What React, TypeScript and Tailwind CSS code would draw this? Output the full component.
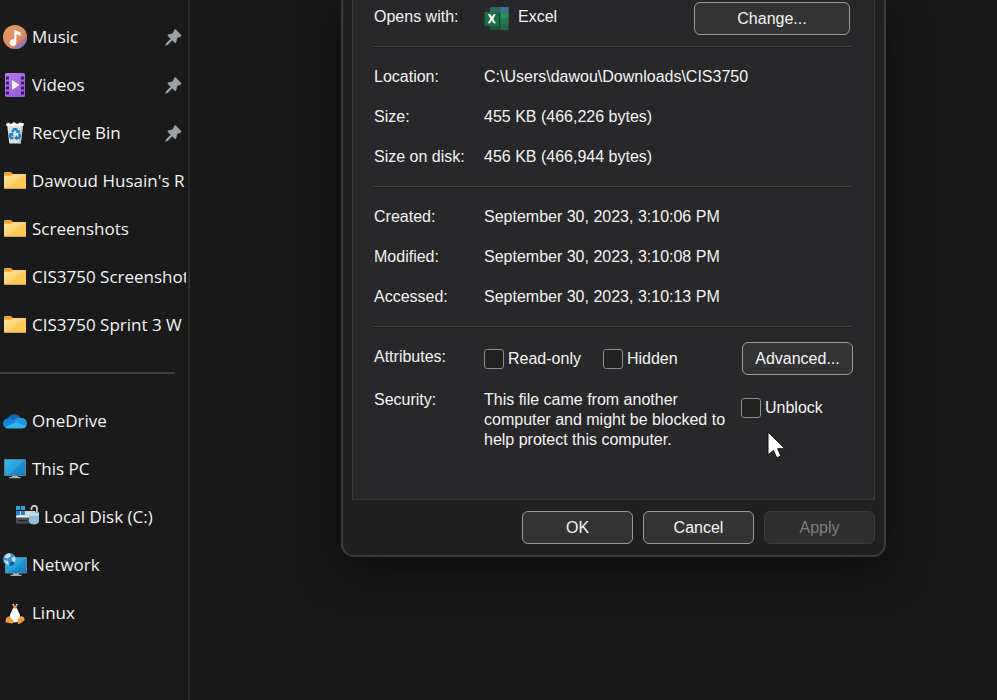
import type { ReactNode } from "react";

function MusicIcon() {
  return (
    <svg width="24" height="24" viewBox="0 0 24 24" aria-hidden="true">
      <defs>
        <clipPath id="disc"><circle cx="12" cy="12" r="12" /></clipPath>
        <linearGradient id="discFill" x1="0" y1="0" x2="1" y2="1">
          <stop offset="0" stopColor="#ec9a66" />
          <stop offset="1" stopColor="#d07e5a" />
        </linearGradient>
      </defs>
      <g clipPath="url(#disc)">
        <rect width="24" height="24" fill="url(#discFill)" />
        <path d="M24 11 10 24h14z" fill="#9a78b4" />
      </g>
      <path d="M11.3 4.800v9.800a3.400 3.400 0 1 0 2 3.100V9.200l4.200 1.500V7.200z" fill="#fff" />
    </svg>
  );
}

function VideosIcon() {
  return (
    <svg width="24" height="24" viewBox="0 0 24 24" aria-hidden="true">
      <defs>
        <linearGradient id="film" x1="0" y1="0" x2="1" y2="1">
          <stop offset="0" stopColor="#b57de8" />
          <stop offset="1" stopColor="#9557dc" />
        </linearGradient>
      </defs>
      <rect x="2" width="20" height="24" rx="1.5" fill="url(#film)" />
      <g fill="#3d1a72">
        <path d="M3 3.500h3v3H3zM3 8.500h3v3H3zM3 13.500h3v3H3zM3 18.500h3v3H3zM18 3.500h3v3h-3zM18 8.500h3v3h-3zM18 13.500h3v3h-3zM18 18.500h3v3h-3z" />
      </g>
      <path d="M9 7v10l7.500-5z" fill="#fff" />
    </svg>
  );
}

function RecycleBinIcon() {
  return (
    <svg width="24" height="24" viewBox="0 0 24 24" aria-hidden="true">
      <path d="M4 3h16l-2.300 19.500H6.300z" fill="#dde1e4" />
      <path d="M3 3l2-1.500L8 3l3-2 3 2 3-1.500L21 2.500 20.500 5h-17z" fill="#f5f6f7" />
      <path d="M18 5h2l-2.300 17.500h-2z" fill="#bfc5ca" />
      <g fill="none" stroke="#1a7fd0" strokeWidth="2.400">
        <path d="M9 11.200l2-3h2l1.500 2.300" />
        <path d="M16 12.500l1 2.500-1.200 2H13" />
        <path d="M10.500 17H8l-1-2 1.200-2.500" />
      </g>
      <path d="M16.800 8.500v3.500h-4zM14 14v5.500L11 17zM5.500 12.500l4.500-.8.500 3.800z" fill="#1a7fd0" />
    </svg>
  );
}

function FolderIcon() {
  return (
    <svg width="24" height="24" viewBox="0 0 24 24" aria-hidden="true">
      <defs>
        <linearGradient id="folder" x1="0" y1="0" x2="1" y2="1">
          <stop offset="0" stopColor="#ffe09a" />
          <stop offset="0.500" stopColor="#fdd272" />
          <stop offset="0.550" stopColor="#fbca58" />
          <stop offset="1" stopColor="#fdcb55" />
        </linearGradient>
      </defs>
      <path d="M1 4.200Q1 3 2.200 3h5.300q.8 0 1.300.7L10 5v4H1z" fill="#eaa52a" />
      <path d="M1 6.500h6.500q.8 0 1.500-.6l1-.9h12q1 0 1 1v13q0 1-1 1H2q-1 0-1-1z" fill="url(#folder)" />
      <path d="M1.300 19.500h21.500" stroke="#dfa137" strokeWidth="1" />
    </svg>
  );
}

function OneDriveIcon() {
  return (
    <svg width="24" height="24" viewBox="0 0 24 24" aria-hidden="true">
      <path d="M5 9.500a7 7 0 0 1 12.700-.4L12 15 3 18.500A5 5 0 0 1 5 9.500z" fill="#1268b8" />
      <path d="M5 9.500q3-.5 5.500 1.500l6 4L4 19A4.800 4.800 0 0 1 0 14.500a5 5 0 0 1 5-5z" fill="#1684d6" />
      <path d="M10.500 11.500q3-3.500 7.300-2.400A5.300 5.300 0 0 1 24 14.500q0 2-1 3l-8-3z" fill="#2196e3" />
      <path d="M2 18l11.500-5 9.800 4.200Q22 19.600 19 19.600H5Q3 19.600 2 18z" fill="#35b5ee" />
    </svg>
  );
}

function MonitorShape() {
  return (
    <>
      <path d="M9 18h6v2h2.500v1.200h-11V20H9z" fill="#a9b2b8" />
      <rect x="1" y="2" width="22" height="17" rx="1" fill="#5b7f92" />
      <rect x="2" y="3" width="20" height="15" fill="url(#screen)" />
      <path d="M22 3v15H6z" fill="#0f74bb" opacity="0.350" />
    </>
  );
}

function ScreenGradient() {
  return (
    <defs>
      <linearGradient id="screen" x1="0" y1="0" x2="1" y2="1">
        <stop offset="0" stopColor="#35bdec" />
        <stop offset="1" stopColor="#1686cc" />
      </linearGradient>
    </defs>
  );
}

function ThisPcIcon() {
  return (
    <svg width="24" height="24" viewBox="0 0 24 24" aria-hidden="true">
      <ScreenGradient />
      <MonitorShape />
    </svg>
  );
}

function DiskIcon() {
  return (
    <svg width="24" height="24" viewBox="0 0 24 24" aria-hidden="true">
      <path d="M1 1h4v4H1zM6 1h4v4H6z" fill="#2aa3e4" />
      <path d="M3 6h17l3 6H1z" fill="#d5dade" />
      <path d="M1 6h4v4H1zM6 6h4v4H6z" fill="#1c86cf" />
      <rect x="1" y="12" width="20" height="6.500" rx="1" fill="#4b5054" />
      <path d="M1 11h20v1.500H1z" fill="#f3f5f6" />
      <path d="M3 15h9v1.500H3z" fill="#24282b" />
      <path d="M16.500 5V3.500a2.700 2.700 0 0 1 5.400 0V7" fill="none" stroke="#c9ced2" strokeWidth="1.800" />
      <path d="M14 7.500h10v9q-1 3-5 3t-5-3z" fill="#8fc0d8" />
      <path d="M14 7.500h10V11H14z" fill="#b9dcea" />
    </svg>
  );
}

function NetworkIcon() {
  return (
    <svg width="24" height="24" viewBox="0 0 24 24" aria-hidden="true">
      <ScreenGradient />
      <path d="M10 20h6v1.800h2.500V23h-11v-1.200H10z" fill="#a9b2b8" />
      <rect x="2" y="4" width="22" height="16.500" rx="1" fill="#66808e" />
      <rect x="3" y="5" width="20" height="14.500" fill="url(#screen)" />
      <path d="M23 5v14.500H8z" fill="#0f74bb" opacity="0.350" />
      <circle cx="6.500" cy="6.500" r="6.500" fill="#3d90cf" />
      <path d="M1 4Q3 .5 7 .3L8 3 5 5.500 2.500 5zM1 7l4 1 1 4.500Q1.800 11 1 7zM8.500 4.500l3.500-1q1.500 3-.3 6L9 8z" fill="#b9dff3" />
      <path d="M9 8.500l2.800 1.300Q10 13 6.500 13L7 10z" fill="#17558f" />
    </svg>
  );
}

function LinuxIcon() {
  return (
    <svg width="24" height="24" viewBox="0 0 24 24" aria-hidden="true">
      <path d="M12 2c2.400 0 3.300 1.800 3.300 4.500 0 3 4.200 6.500 4.200 11.500L12 22.500 4.500 18C4.500 13 8.700 9.500 8.700 6.500 8.700 3.800 9.600 2 12 2z" fill="#0c0c0c" />
      <path d="M12 6.500c2.400 0 2.800 3 4.200 5.500 1.700 3 2 9-4.200 9.500-6.200-.5-5.900-6.500-4.200-9.500C9.200 9.500 9.600 6.500 12 6.500z" fill="#fff" />
      <circle cx="10.300" cy="3.800" r="1" fill="#ddd" />
      <circle cx="13.700" cy="3.800" r="1" fill="#ddd" />
      <path d="M9.600 5.500L12 4.300l2.500 1.200L12 8z" fill="#e8962a" />
      <path d="M6 15l4.500 5q.5 2.500-1.500 2.500L2.500 21.300l.5-4zM18 15l-3.200 3-.3 4.300q1.200 1.300 3 0L21.800 19l-1-3z" fill="#eda02f" />
    </svg>
  );
}

function PinIcon() {
  return (
    <svg width="17" height="17" viewBox="0 0 17 17" fill="#97a0ab" aria-hidden="true">
      <path d="M9.300.8Q10-.2 11 .8l5 4.900q1 1.100-.3 1.700L12.400 9l-1.300 4.500q-.5 1.200-1.500.3l-2.300-2.400-4.400 4.400-2.700 1.100L1.300 14l4.300-4.300-2.700-2.700q-.9-1 .4-1.500l4.400-1.300z" />
    </svg>
  );
}

function ExcelIcon() {
  return (
    <svg width="25" height="23" viewBox="0 0 25 24" aria-hidden="true">
      <path d="M6 0h19v24H6z" fill="#216b48" />
      <path d="M6 0h11v6H6z" fill="#2d6b62" />
      <path d="M17 0h8v6h-8z" fill="#42719c" />
      <path d="M17 6h8v6h-8z" fill="#2c8f60" />
      <path d="M17 12h8v6h-8z" fill="#237a50" />
      <path d="M6 18h11v6H6z" fill="#1e5340" />
      <path d="M3 6h13v14H3z" fill="#123d2a" />
      <path d="M0 5h15v15H0z" fill="#1c6f45" />
      <path d="M3.500 7.500h2.700l1.500 3 1.600-3h2.500l-2.700 4.800 2.800 4.700H9.300l-1.700-3-1.700 3H3.200l2.900-4.700z" fill="#fff" />
    </svg>
  );
}

type Entry = { label: string; icon: ReactNode; pinned?: boolean; nested?: boolean };

const quickAccess: Entry[] = [
  { label: "Music", icon: <MusicIcon />, pinned: true },
  { label: "Videos", icon: <VideosIcon />, pinned: true },
  { label: "Recycle Bin", icon: <RecycleBinIcon />, pinned: true },
  { label: "Dawoud Husain's R", icon: <FolderIcon /> },
  { label: "Screenshots", icon: <FolderIcon /> },
  { label: "CIS3750 Screenshot", icon: <FolderIcon /> },
  { label: "CIS3750 Sprint 3 W", icon: <FolderIcon /> },
];

const places: Entry[] = [
  { label: "OneDrive", icon: <OneDriveIcon /> },
  { label: "This PC", icon: <ThisPcIcon /> },
  { label: "Local Disk (C:)", icon: <DiskIcon />, nested: true },
  { label: "Network", icon: <NetworkIcon /> },
  { label: "Linux", icon: <LinuxIcon /> },
];

function EntryList({ entries }: { entries: Entry[] }) {
  return (
    <ul>
      {entries.map((e) => (
        <li key={e.label}>
          <a href="#" className={`flex h-12 items-center gap-[5px] ${e.nested ? "pl-[15px]" : "pl-[3px]"}`}>
            <span className="shrink-0">{e.icon}</span>
            <span className="flex-1 overflow-hidden whitespace-nowrap">{e.label}</span>
            {e.pinned && <span className="mr-1 shrink-0"><PinIcon /></span>}
          </a>
        </li>
      ))}
    </ul>
  );
}

function Button({ children, className = "", disabled = false }: { children: ReactNode; className?: string; disabled?: boolean }) {
  return (
    <button
      type="button"
      disabled={disabled}
      className={`h-[33px] shrink-0 rounded-md border border-[#9a9a9a] bg-[#333333] disabled:border-[#3b3b3b] disabled:bg-[#2f2f2f] disabled:text-[#7c7c7c] ${className}`}
    >
      {children}
    </button>
  );
}

function CheckBox({ label }: { label: string }) {
  return (
    <label className="flex items-center gap-1">
      <input type="checkbox" className="size-5 shrink-0 appearance-none rounded-[3px] border border-[#8c8c8c] bg-[#212121] checked:bg-[#4cc2ff]" />
      {label}
    </label>
  );
}

function Rule() {
  return <hr className="mr-0.5 h-0.5 border-t border-b border-t-[#444444] border-b-[#1b1b1b]" />;
}

function Facts({ rows }: { rows: [string, string][] }) {
  return (
    <dl className="grid grid-cols-[110px_1fr] gap-y-5 pt-[19px] pb-[19px]">
      {rows.map(([name, value]) => (
        <div key={name} className="contents">
          <dt>{name}</dt>
          <dd>{value}</dd>
        </div>
      ))}
    </dl>
  );
}

export default function App() {
  return (
    <div className="flex min-h-screen overflow-hidden bg-[#191919] text-[#f3f3f3]">
      <nav className="w-[190px] shrink-0 border-r-2 border-[#2c2c2c] bg-[#1a1a1a] pt-[13px] pr-0.5 font-['Open_Sans',sans-serif] text-[17px]">
        <EntryList entries={quickAccess} />
        <div className="flex h-12 items-center pr-[11px]">
          <hr className="flex-1 border-t-2 border-[#3a3a3a]" />
        </div>
        <EntryList entries={places} />
      </nav>

      <main className="relative flex-1 pl-[151px] font-['Liberation_Sans',Arial,sans-serif] text-[16px] leading-5">
        <section
          aria-label="File properties"
          className="w-[545px] rounded-b-[13px] border-2 border-t-0 border-[#3a3a3a] bg-[#202020] px-[9px] pb-[11px] shadow-[0_12px_44px_rgba(0,0,0,0.600)]"
        >
          <div className="border border-t-0 border-[#3a3a3a] bg-[#28282a] px-[21px] pt-0.5 pb-[49px]">
            <div className="flex h-11">
              <span className="w-[110px] pt-[5px]">Opens with:</span>
              <span className="flex flex-1 items-start gap-[9px] pt-[5px]">
                <ExcelIcon />
                Excel
              </span>
              <Button className="mr-[3px] w-[156px]">Change...</Button>
            </div>
            <Rule />
            <Facts
              rows={[
                ["Location:", "C:\\Users\\dawou\\Downloads\\CIS3750"],
                ["Size:", "455 KB (466,226 bytes)"],
                ["Size on disk:", "456 KB (466,944 bytes)"],
              ]}
            />
            <Rule />
            <Facts
              rows={[
                ["Created:", "September 30, 2023, 3:10:06 PM"],
                ["Modified:", "September 30, 2023, 3:10:08 PM"],
                ["Accessed:", "September 30, 2023, 3:10:13 PM"],
              ]}
            />
            <Rule />
            <div className="flex pt-3.5">
              <span className="w-[110px] pt-[5px]">Attributes:</span>
              <div className="flex flex-1 items-center gap-[22px]">
                <CheckBox label="Read-only" />
                <CheckBox label="Hidden" />
              </div>
              <Button className="w-[111px]">Advanced...</Button>
            </div>
            <div className="flex items-start pt-[15px]">
              <span className="w-[110px]">Security:</span>
              <p className="flex-1 pr-3.5">This file came from another computer and might be blocked to help protect this computer.</p>
              <div className="w-28 pt-2">
                <CheckBox label="Unblock" />
              </div>
            </div>
          </div>
          <div className="flex justify-end gap-2.5 pt-[11px]">
            <Button className="w-[111px]">OK</Button>
            <Button className="w-[111px]">Cancel</Button>
            <Button className="w-[111px]" disabled>Apply</Button>
          </div>
        </section>

        <svg className="absolute top-[431px] left-[577px]" width="20" height="28" viewBox="0 0 20 28" aria-hidden="true">
          <path d="M1 1v23l5.400-4.600 3.400 7.400 4.200-1.800-3.400-7.300H18z" fill="#fff" stroke="#111" strokeWidth="1" />
        </svg>
      </main>
    </div>
  );
}
